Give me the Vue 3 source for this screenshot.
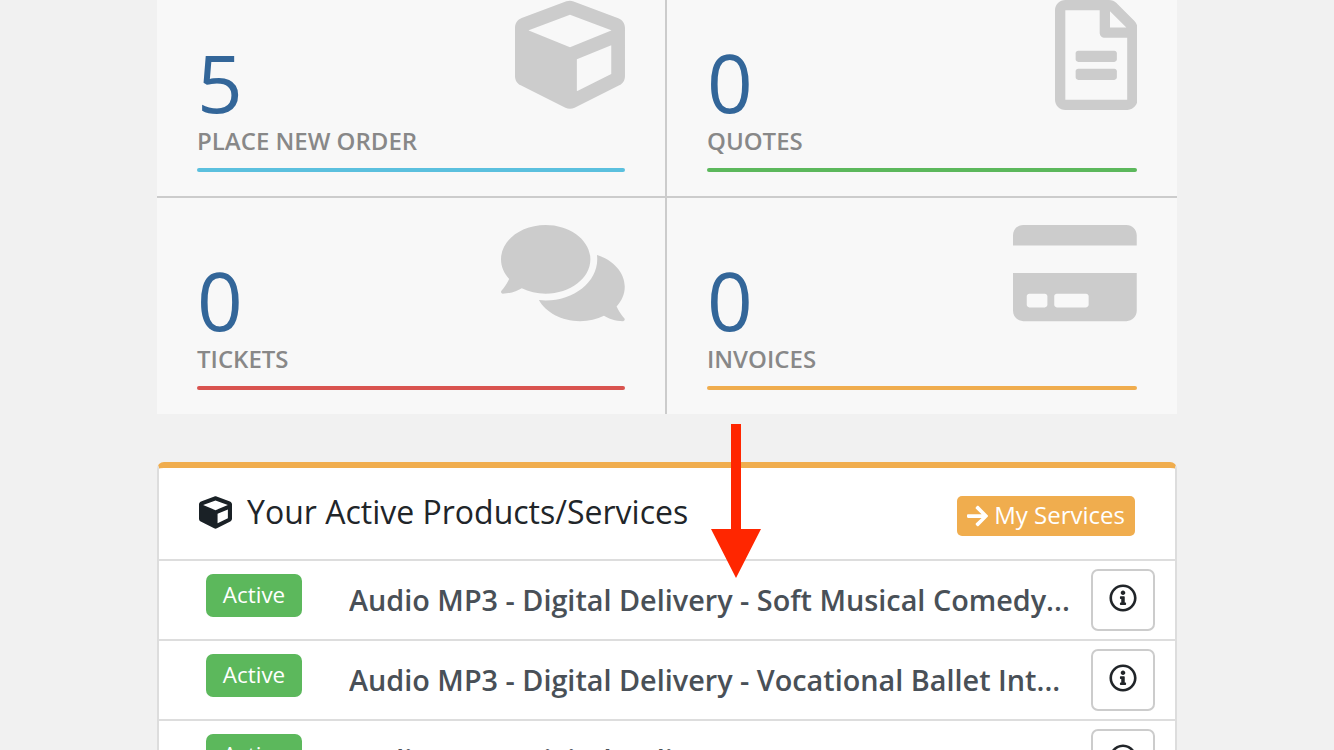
<script setup>
const tiles = [
  { n: 5, label: 'PLACE NEW ORDER', color: '#5bc0de', icon: 'cube' },
  { n: 0, label: 'QUOTES', color: '#5cb85c', icon: 'file' },
  { n: 0, label: 'TICKETS', color: '#d9534f', icon: 'comments' },
  { n: 0, label: 'INVOICES', color: '#f0ad4e', icon: 'card' },
]
const icons = {
  cube: { w: 512, d: 'M239.1 6.3l-208 78c-18.7 7-31.1 25-31.1 45v225.1c0 18.2 10.3 34.8 26.5 42.9l208 104c13.5 6.8 29.4 6.8 42.9 0l208-104c16.3-8.1 26.5-24.8 26.5-42.9V129.3c0-20-12.4-37.9-31.1-44.9l-208-78C262 2.2 250 2.2 239.1 6.3zM256 68.4l192 72v1.1l-192 78-192-78v-1.1l192-72zm32 356V275.5l160-65v133.9l-160 80z' },
  file: { w: 384, d: 'M288 248v28c0 6.6-5.4 12-12 12H108c-6.6 0-12-5.4-12-12v-28c0-6.6 5.4-12 12-12h168c6.6 0 12 5.4 12 12zm-12 72H108c-6.6 0-12 5.4-12 12v28c0 6.6 5.4 12 12 12h168c6.6 0 12-5.4 12-12v-28c0-6.6-5.4-12-12-12zm108-188.1V464c0 26.5-21.5 48-48 48H48c-26.5 0-48-21.5-48-48V48C0 21.5 21.5 0 48 0h204.1C264.8 0 277 5.1 286 14.1L369.9 98c9 8.9 14.1 21.2 14.1 33.9zm-128-80V128h76.1L256 51.9zM336 464V176H232c-13.3 0-24-10.7-24-24V48H48v416h288z' },
  comments: { w: 576, d: 'M416 192c0-88.4-93.1-160-208-160S0 103.6 0 192c0 34.3 14.1 65.9 38 92-13.4 30.2-35.5 54.2-35.8 54.5-2.2 2.3-2.8 5.7-1.5 8.7S4.8 352 8 352c36.6 0 66.9-12.3 88.7-25 32.2 15.7 70.3 25 111.3 25 114.9 0 208-71.6 208-160zm122 220c23.9-26 38-57.7 38-92 0-66.9-53.5-124.2-129.3-148.1.9 6.6 1.3 13.3 1.3 20.1 0 105.9-107.7 192-240 192-10.8 0-21.3-.8-31.7-1.9C207.8 439.6 281.8 480 368 480c41 0 79.1-9.2 111.3-25 21.8 12.7 52.1 25 88.7 25 3.2 0 6.1-1.9 7.3-4.8 1.3-2.9.7-6.3-1.5-8.7-.3-.3-22.4-24.2-35.8-54.5z' },
  card: { w: 576, d: 'M0 432c0 26.5 21.5 48 48 48h480c26.5 0 48-21.5 48-48V256H0v176zm192-68c0-6.6 5.4-12 12-12h136c6.6 0 12 5.4 12 12v40c0 6.6-5.4 12-12 12H204c-6.6 0-12-5.4-12-12v-40zm-128 0c0-6.6 5.4-12 12-12h72c6.6 0 12 5.4 12 12v40c0 6.6-5.4 12-12 12H76c-6.6 0-12-5.4-12-12v-40zM576 80v48H0V80c0-26.5 21.5-48 48-48h480c26.5 0 48 21.5 48 48z' },
}
const rows = [
  'Audio MP3 - Digital Delivery - Soft Musical Comedy...',
  'Audio MP3 - Digital Delivery - Vocational Ballet Int...',
  'Audio MP3 - Digital Delivery',
]
const infoPath = 'M256 8C119.043 8 8 119.083 8 256c0 136.997 111.043 248 248 248s248-111.003 248-248C504 119.083 392.957 8 256 8zm0 448c-110.532 0-200-89.431-200-200 0-110.495 89.472-200 200-200 110.491 0 200 89.471 200 200 0 110.53-89.431 200-200 200zm0-338c23.196 0 42 18.804 42 42s-18.804 42-42 42-42-18.804-42-42 18.804-42 42-42zm56 254c0 6.627-5.373 12-12 12h-88c-6.627 0-12-5.373-12-12v-24c0-6.627 5.373-12 12-12h12v-64h-12c-6.627 0-12-5.373-12-12v-24c0-6.627 5.373-12 12-12h64c6.627 0 12 5.373 12 12v100h12c6.627 0 12 5.373 12 12v24z'
</script>

<template>
  <div class="viewport">
    <div class="page">
      <div class="tiles">
        <a v-for="t in tiles" :key="t.label" class="tile">
          <svg class="tile-icon" :viewBox="`0 0 ${icons[t.icon].w} 512`" :style="{ width: (icons[t.icon].w * 110 / 512) + 'px' }">
            <path :d="icons[t.icon].d" />
          </svg>
          <div class="stat">{{ t.n }}</div>
          <div class="title">{{ t.label }}</div>
          <div class="highlight" :style="{ background: t.color }"></div>
        </a>
      </div>

      <section class="panel">
        <header class="panel-head">
          <h3 class="panel-title">
            <svg class="head-icon" viewBox="0 0 512 512"><path :d="icons.cube.d" /></svg>
            Your Active Products/Services
          </h3>
          <a class="btn-services">
            <svg class="btn-arrow" viewBox="0 0 448 512"><path d="M190.5 66.9l22.2-22.2c9.4-9.4 24.6-9.4 33.9 0L441 239c9.4 9.4 9.4 24.6 0 33.9L246.6 467.3c-9.4 9.4-24.6 9.4-33.9 0l-22.2-22.2c-9.5-9.5-9.3-25 .4-34.3L311.4 296H24c-13.3 0-24-10.7-24-24v-32c0-13.3 10.7-24 24-24h287.4L190.9 101.2c-9.8-9.3-10-24.8-.4-34.3z" /></svg>
            <span class="btn-label">My Services</span>
          </a>
        </header>
        <div v-for="(r, i) in rows" :key="i" class="row">
          <span class="badge">Active</span>
          <span class="name">{{ r }}</span>
          <button class="info">
            <svg class="info-icon" viewBox="0 0 512 512"><path :d="infoPath" /></svg>
          </button>
        </div>
      </section>
    </div>

    <svg class="red-arrow" viewBox="0 0 50 154"><path d="M20 0h10v105h20L25 154 0 105h20z" /></svg>
  </div>
</template>

<style>
html, body { margin: 0; background: #f1f1f1; overflow: hidden; }
</style>

<style scoped>
.viewport {
  position: relative;
  height: 750px;
  overflow: hidden;
  background: #f1f1f1;
  font-family: "Open Sans", "Noto Sans", sans-serif;
}
.page {
  width: 1020px;
  margin: -20px 0 0 157px;
}
.tiles {
  display: grid;
  grid-template-columns: 510px 510px;
  background: #f8f8f8;
}
.tile {
  position: relative;
  display: flex;
  flex-direction: column;
  justify-content: flex-end;
  box-sizing: border-box;
  height: 216px;
  padding: 0 40px 24px;
}
.tile:nth-child(1), .tile:nth-child(2) { height: 218px; border-bottom: 2px solid #ccc; }
.tile:nth-child(odd) { border-right: 2px solid #ccc; }
.tile-icon {
  position: absolute;
  top: 20px;
  right: 40px;
  height: 110px;
  fill: #ccc;
}
.stat {
  font-size: 80px;
  font-weight: 400;
  line-height: 80px;
  color: #336699;
}
.title {
  margin-top: 3px;
  margin-bottom: 11px;
  font-size: 24px;
  font-weight: 600;
  line-height: 32px;
  color: #888;
}
.highlight {
  height: 4px;
  border-radius: 2px;
}
.panel {
  box-sizing: border-box;
  width: 1020px;
  margin-top: 48px;
  background: #fff;
  border-top: 6px solid #f0ad4e;
  border-left: 2px solid #ddd;
  border-right: 2px solid #ddd;
  border-radius: 7px 7px 0 0;
}
.panel-head {
  display: flex;
  align-items: center;
  justify-content: space-between;
  box-sizing: border-box;
  height: 93px;
  padding: 0 40px;
  border-bottom: 2px solid #ddd;
}
.panel-title {
  display: flex;
  align-items: center;
  gap: 15px;
  margin: -3px 0 0;
  font-size: 32px;
  font-weight: 400;
  line-height: 40px;
  color: #212529;
}
.head-icon { width: 33px; height: 33px; fill: #1a2126; }
.btn-services {
  display: flex;
  align-items: center;
  gap: 6px;
  box-sizing: border-box;
  height: 40px;
  margin-top: 4px;
  padding: 0 10px;
  background: #f0ad4e;
  border-radius: 5px;
  font-size: 24px;
  color: #fff;
}
.btn-label { margin-top: -2px; }
.btn-arrow { width: 21px; height: 24px; fill: #fff; }
.row {
  display: flex;
  align-items: center;
  box-sizing: border-box;
  height: 80px;
  padding: 0 20px 0 47px;
  border-bottom: 2px solid #ddd;
}
.badge {
  flex: none;
  width: 96px;
  height: 43px;
  margin-top: -10px;
  border-radius: 7px;
  background: #5cb85c;
  font-size: 22.4px;
  font-weight: 400;
  line-height: 42px;
  text-align: center;
  color: #fff;
}
.name {
  flex: 1;
  margin-left: 47px;
  font-size: 28.8px;
  font-weight: 600;
  line-height: 40px;
  color: #495057;
  white-space: nowrap;
  overflow: hidden;
}
.info {
  flex: none;
  display: flex;
  align-items: center;
  justify-content: center;
  box-sizing: border-box;
  width: 64px;
  height: 62px;
  padding: 0;
  background: #fff;
  border: 2px solid #ccc;
  border-radius: 7px;
}
.info-icon { width: 28px; height: 28px; fill: #212529; margin-top: -4px; }
.red-arrow {
  position: absolute;
  left: 711px;
  top: 424px;
  width: 50px;
  height: 154px;
  fill: #ff2600;
}
</style>
